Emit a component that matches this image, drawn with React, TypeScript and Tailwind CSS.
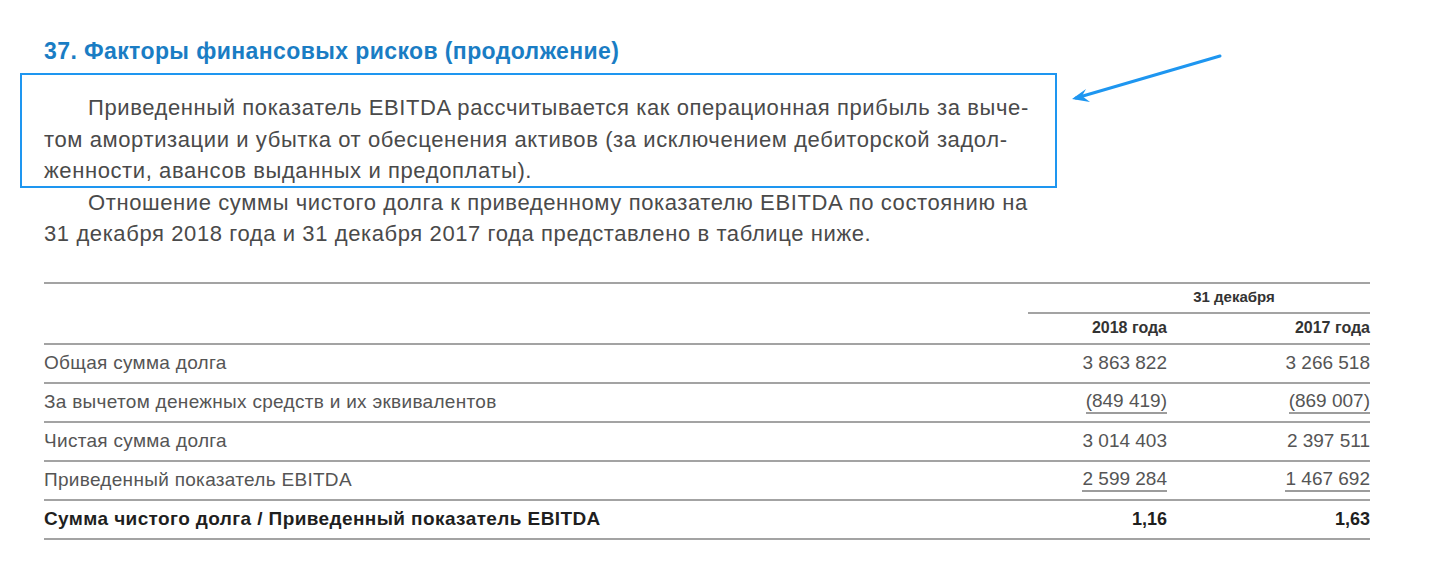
const rows = [
  { label: "Общая сумма долга", a: "3 863 822", b: "3 266 518", line: false, bold: false },
  { label: "За вычетом денежных средств и их эквивалентов", a: "(849 419)", b: "(869 007)", line: true, bold: false },
  { label: "Чистая сумма долга", a: "3 014 403", b: "2 397 511", line: false, bold: false },
  { label: "Приведенный показатель EBITDA", a: "2 599 284", b: "1 467 692", line: true, bold: false },
  { label: "Сумма чистого долга / Приведенный показатель EBITDA", a: "1,16", b: "1,63", line: false, bold: true },
];

function Value({ text, line, bold }: { text: string; line: boolean; bold: boolean }) {
  return (
    <div className="flex justify-end">
      <span
        className={`${bold ? "font-bold text-[#1f1f1f] text-[18px]" : ""} ${line ? "border-b-2 border-[#9c9c9c] pb-[1px] leading-[21px]" : ""}`}
      >
        {text}
      </span>
    </div>
  );
}

export default function App() {
  return (
    <div className="relative w-[1430px] h-[579px] bg-white overflow-hidden pl-[44px] pt-[36px] font-['Liberation_Sans',Arial,sans-serif]">
      <h1 className="text-[23px] leading-[30px] tracking-[0.4px] font-bold text-[#1a7dc4]">
        37. Факторы финансовых рисков (продолжение)
      </h1>

      <div className="mt-[26px] text-[22px] leading-[31.5px] tracking-[0.6px] text-[#4a4a4a]">
        <p>
          <span className="pl-[44px]">Приведенный показатель EBITDA рассчитывается как операционная прибыль за выче-</span>
          <br />
          том амортизации и убытка от обесценения активов (за исключением дебиторской задол-
          <br />
          женности, авансов выданных и предоплаты).
        </p>
        <p>
          <span className="pl-[44px]">Отношение суммы чистого долга к приведенному показателю EBITDA по состоянию на</span>
          <br />
          31 декабря 2018 года и 31 декабря 2017 года представлено в таблице ниже.
        </p>
      </div>

      <div className="mt-[32px] w-[1326px] border-t-2 border-[#a3a3a3] text-[19px] text-[#555]">
        <div className="grid grid-cols-[1fr_342px]">
          <div />
          <div className="h-[30px] flex items-center justify-center pl-[70px] border-b-2 border-[#a3a3a3] text-[15px] font-bold text-[#333]">
            31 декабря
          </div>
        </div>
        <div className="grid grid-cols-[1fr_139px_203px] h-[31px] items-center border-b-2 border-[#a3a3a3] text-[16px] font-bold text-[#333]">
          <div />
          <div className="text-right">2018 года</div>
          <div className="text-right">2017 года</div>
        </div>
        {rows.map((r) => (
          <div
            key={r.label}
            className="grid grid-cols-[1fr_139px_203px] h-[39px] items-center border-b-2 border-[#a3a3a3]"
          >
            <div
              className={r.bold ? "font-bold text-[#1f1f1f] text-[19px] tracking-[0.4px]" : "tracking-[0.3px]"}
            >
              {r.label}
            </div>
            <Value text={r.a} line={r.line} bold={r.bold} />
            <Value text={r.b} line={r.line} bold={r.bold} />
          </div>
        ))}
      </div>

      <div className="absolute left-[20px] top-[73px] w-[1037px] h-[115px] border-2 border-[#1e96f0]" />

      <svg className="absolute left-[1060px] top-[46px]" width="180" height="70" viewBox="0 0 180 70">
        <path d="M160 10 L16 52" stroke="#1e96f0" strokeWidth="3" strokeLinecap="round" />
        <path d="M12 53 L26 43 L22 50 L30 56 Z" fill="#1e96f0" />
      </svg>
    </div>
  );
}
